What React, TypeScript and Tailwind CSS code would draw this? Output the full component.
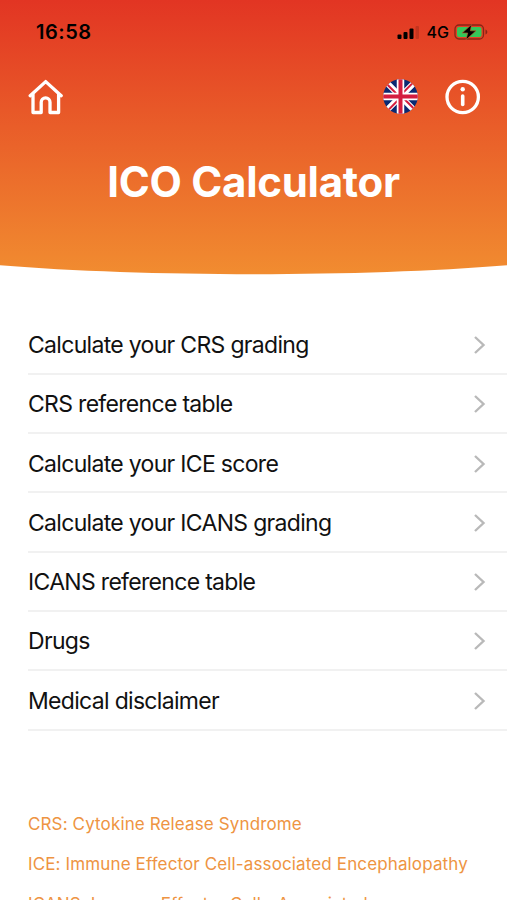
import React from 'react';

const menuItems = [
  'Calculate your CRS grading',
  'CRS reference table',
  'Calculate your ICE score',
  'Calculate your ICANS grading',
  'ICANS reference table',
  'Drugs',
  'Medical disclaimer',
];

const glossary = [
  'CRS: Cytokine Release Syndrome',
  'ICE: Immune Effector Cell-associated Encephalopathy',
  'ICANS: Immune Effector Cells-Associated',
];

const StatusBar: React.FC = () => (
  <div className="flex h-16 items-center justify-between pl-9 pr-[18px] text-black">
    <span className="text-[20px] font-semibold leading-6 tracking-[0.5px]">16:58</span>
    <div className="flex items-center">
      <svg className="mt-[2px]" width="24" height="14" viewBox="0 0 24 14">
        <rect x="0.5" y="8.5" width="4" height="4.5" rx="1" />
        <rect x="6.5" y="6" width="4" height="7" rx="1" />
        <rect x="12.5" y="2.5" width="4" height="10.5" rx="1" />
        <rect x="18.5" y="0" width="3.5" height="13" rx="1" opacity="0.15" />
      </svg>
      <span className="ml-[6px] text-[16px] font-medium leading-5">4G</span>
      <svg className="ml-[5px]" width="35" height="18" viewBox="0 0 35 18">
        <rect x="1" y="2" width="28.5" height="14" rx="4" fill="none" stroke="#000" strokeOpacity="0.4" strokeWidth="1.3" />
        <path d="M31.5 6.5c2.4.8 2.4 4.2 0 5z" opacity="0.4" />
        <rect x="3" y="4" width="24.5" height="10" rx="2" fill="#34c759" />
        <path d="M17.5 1.5 8.2 10h5.5l-1.7 6.8L22 7.8h-5.6z" stroke="#b5602c" strokeWidth="0.7" />
      </svg>
    </div>
  </div>
);

const HomeIcon: React.FC = () => (
  <svg width="36" height="36" viewBox="0 0 36 36" fill="none" stroke="#fff" strokeWidth="3.3" strokeLinecap="round" strokeLinejoin="round">
    <path d="M2.2 16.7 17.7 2.6l15.5 14.1" />
    <path d="M5 15.5v18h8.2V23.2a4.4 4.4 0 0 1 8.8 0v10.3h8.6V15.5" />
  </svg>
);

const FlagIcon: React.FC = () => (
  <svg className="mb-px" width="35" height="35" viewBox="0 0 35 35">
    <clipPath id="flag">
      <circle cx="17.5" cy="17.5" r="17.3" />
    </clipPath>
    <g clipPath="url(#flag)">
      <path d="M0 0h35v35H0z" fill="#0b2a73" />
      <path d="M0 0l35 35M35 0 0 35" stroke="#fff" strokeWidth="6" />
      <path d="M0 1.3 17.5 18.8M17.5 16.2 35 33.7M35 -1.3 17.5 16.2M17.5 18.8 0 36.3" stroke="#d41d3f" strokeWidth="2" />
      <path d="M17.5 0v35M0 17.5h35" stroke="#fff" strokeWidth="7.5" />
      <path d="M17.5 0v35M0 17.5h35" stroke="#d41d3f" strokeWidth="4" />
    </g>
  </svg>
);

const InfoIcon: React.FC = () => (
  <svg width="36" height="36" viewBox="0 0 36 36" fill="none" stroke="#fff">
    <circle cx="17.7" cy="18" r="15.7" strokeWidth="3.3" />
    <circle cx="17.7" cy="10.3" r="2.2" fill="#fff" stroke="none" />
    <path d="M17.7 17v8.5" strokeWidth="3.6" strokeLinecap="round" />
  </svg>
);

const App: React.FC = () => {
  return (
    <div className="h-[900px] w-full overflow-hidden bg-white font-['Inter','Liberation_Sans',sans-serif]">
      <header className="relative h-[275px] overflow-hidden">
        {/* Curved gradient background */}
        <svg className="absolute inset-0" width="507" height="275" viewBox="0 0 507 275">
          <defs>
            <linearGradient id="header" x1="0" y1="0" x2="0" y2="1">
              <stop offset="0" stopColor="#e23523" />
              <stop offset="1" stopColor="#f18c30" />
            </linearGradient>
          </defs>
          <path d="M0 0h507v265.3C362 277.2 145 277.2 0 265.3z" fill="url(#header)" />
        </svg>

        <div className="relative">
          <StatusBar />
          <div className="flex items-center justify-between pl-7 pr-[26.5px] pt-[15px]">
            <button aria-label="Home">
              <HomeIcon />
            </button>
            <div className="flex items-center gap-[27px]">
              <button aria-label="Language">
                <FlagIcon />
              </button>
              <button aria-label="Information">
                <InfoIcon />
              </button>
            </div>
          </div>
          <h1 className="mt-[41px] text-center text-[42px] font-bold leading-[52px] tracking-[-0.27px] text-white">
            ICO Calculator
          </h1>
        </div>
      </header>

      <nav className="pl-7 pt-[40.4px]">
        {menuItems.map((label) => (
          <a
            key={label}
            className="flex h-[59.33px] items-center justify-between border-b-2 border-[#f1f1f1] pr-5 pt-[1.6px]"
          >
            <span className="whitespace-nowrap text-[23px] leading-7 tracking-[-0.69px] text-[#111]">{label}</span>
            <svg width="14" height="20" viewBox="0 0 14 20" fill="none" stroke="#b9b9b9" strokeWidth="2.4">
              <path d="m2 2 8.5 8L2 18" />
            </svg>
          </a>
        ))}
      </nav>

      <div className="flex flex-col gap-4 pl-7 pt-[81px] text-[17px] leading-6 tracking-[0.13px] text-[#ee9442]">
        {glossary.map((line) => (
          <p key={line} className="whitespace-nowrap">{line}</p>
        ))}
      </div>
    </div>
  );
};

export default App;
